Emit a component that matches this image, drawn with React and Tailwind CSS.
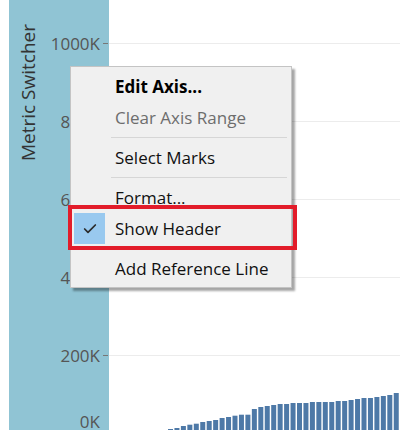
import { Check } from 'lucide-react'

const ticks = [
  { label: '1000K', y: 43 },
  { label: '800K', y: 121 },
  { label: '600K', y: 199 },
  { label: '400K', y: 277 },
  { label: '200K', y: 355 },
]

// bar tops in page px, baseline sits just below the window
const barTops = [
  429, 428, 426, 424.7, 423.7, 422, 421, 420, 418, 417, 415.7, 414.7, 414.7, 409, 407, 406, 405, 404,
  404, 403, 403, 403, 402, 402, 402, 402, 401, 401, 400, 399, 398, 398, 397, 396, 395, 393,
]

function MenuItem({ children, bold, muted, checked }) {
  return (
    <div className="relative h-[31px] flex items-center pl-[44px]">
      {checked && (
        <div className="absolute left-[3px] top-0 w-[31px] h-[31px] bg-[#99c9ef] flex items-center justify-center">
          <Check size={16} strokeWidth={2.6} className="text-[#2b2b2b]" />
        </div>
      )}
      <span
        className={
          bold
            ? 'text-[17px] font-bold text-black leading-none'
            : muted
            ? 'text-[17px] text-[#6d6d6d] leading-none'
            : 'text-[17px] text-[#111] leading-none'
        }
      >
        {children}
      </span>
    </div>
  )
}

function Separator() {
  return (
    <div className="h-[9px] flex items-center ml-[40px] mr-[4px]">
      <div className="h-px w-full bg-[#d6d6d6]" />
    </div>
  )
}

export default function App() {
  return (
    <div className="relative w-[400px] h-[430px] overflow-hidden bg-white flex font-['Open_Sans',sans-serif]">
      <div className="w-[9px] flex-shrink-0" />

      {/* header panel + axis */}
      <div className="relative w-[100px] flex-shrink-0 bg-[#90c4d4]">
        <div className="pt-[24px] pl-[7px]">
          <span className="block [writing-mode:vertical-rl] rotate-180 text-[19px] text-[#333] leading-[24px]">
            Metric Switcher
          </span>
        </div>
        {ticks.map((t) => (
          <div
            key={t.label}
            className="absolute right-0 flex items-center h-[22px] -translate-y-1/2"
            style={{ top: t.y }}
          >
            <span className="text-[17px] text-[#555] leading-none mr-[3px]">{t.label}</span>
            <span className="w-[5px] h-px bg-[#777] mr-[1px]" />
          </div>
        ))}
        <div className="absolute right-[9px] top-[412px] h-[18px] flex items-center">
          <span className="text-[17px] text-[#555] leading-none">0K</span>
        </div>
      </div>

      {/* plot */}
      <svg width="291" height="430" className="flex-shrink-0">
        {ticks.map((t) => (
          <line key={t.label} x1="0" x2="291" y1={t.y + 0.5} y2={t.y + 0.5} stroke="#ececec" strokeWidth="1" />
        ))}
        {barTops.map((top, i) => (
          <rect key={i} x={168 - 109 + i * 6.45} y={top} width="5" height={433 - top} fill="#4e79a7" />
        ))}
      </svg>

      {/* context menu */}
      <div className="absolute left-[70px] top-[66px] w-[222px] bg-[#f0f0f0] border border-[#c4c4c4] shadow-[3px_3px_2px_rgba(0,0,0,0.35)] pt-[4px] pb-[3px]">
        <MenuItem bold>Edit Axis...</MenuItem>
        <MenuItem muted>Clear Axis Range</MenuItem>
        <Separator />
        <MenuItem>Select Marks</MenuItem>
        <Separator />
        <MenuItem>Format...</MenuItem>
        <MenuItem checked>Show Header</MenuItem>
        <Separator />
        <MenuItem>Add Reference Line</MenuItem>
      </div>

      {/* highlight box */}
      <div className="absolute left-[68px] top-[205px] w-[229px] h-[45px] border-4 border-[#e21c2a]" />
    </div>
  )
}
